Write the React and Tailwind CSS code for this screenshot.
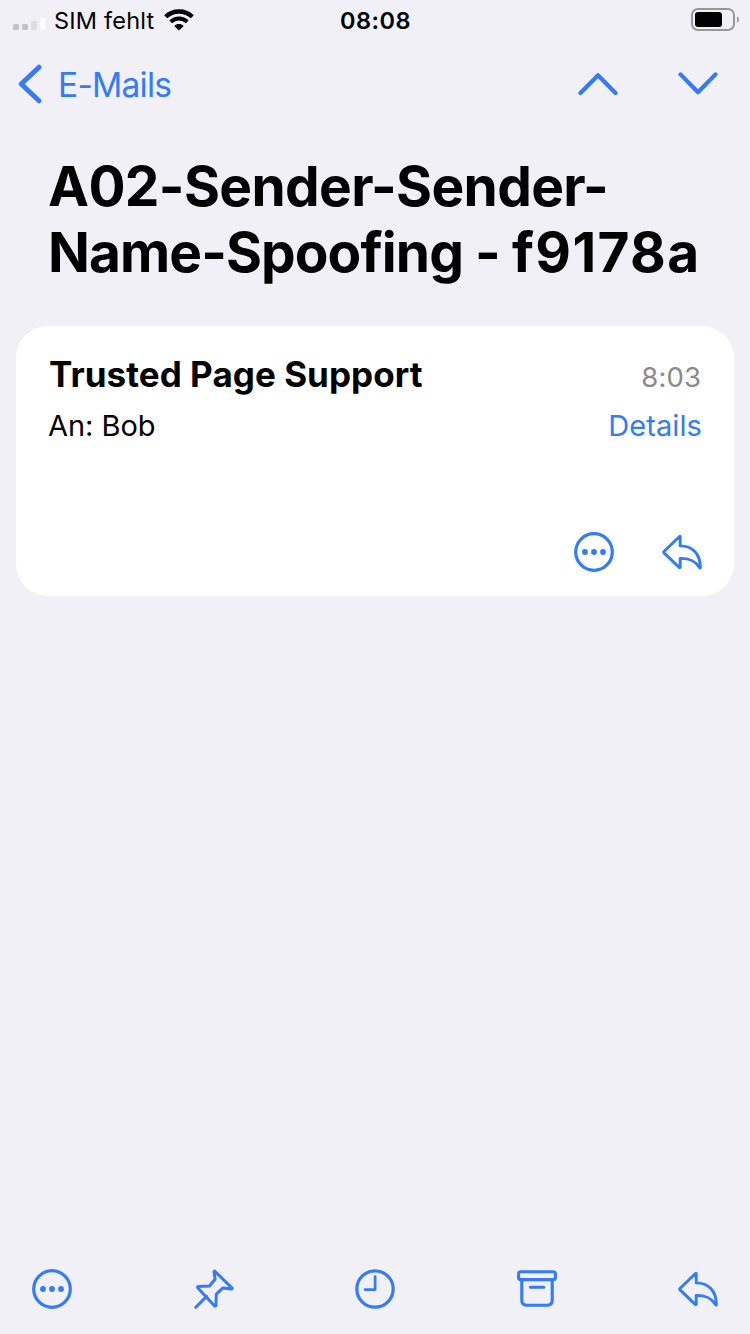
import React from "react";

function MoreIcon() {
  return (
    <svg width="40" height="40" viewBox="0 0 40 40" fill="none" className="shrink-0">
      <circle cx="20" cy="20" r="18.3" stroke="currentColor" strokeWidth="3.2" />
      <circle cx="11" cy="20" r="2.9" fill="currentColor" />
      <circle cx="20" cy="20" r="2.9" fill="currentColor" />
      <circle cx="29" cy="20" r="2.9" fill="currentColor" />
    </svg>
  );
}

function ReplyIcon() {
  return (
    <svg width="40" height="40" viewBox="0 0 40 40" fill="none" className="shrink-0">
      <path
        d="M18.2 4.6V13.9C30.5 13.9 38.2 21.5 38.4 35.6Q38.2 36.6 37.4 35.6C33.6 29.2 28.5 26.3 18.2 26.4V35.2Q17.9 36.1 17.2 35.4L2 20.9Q1.4 20.2 2 19.5L17.2 4.7Q17.9 4 18.2 4.6Z"
        stroke="currentColor"
        strokeWidth="2.9"
        strokeLinejoin="round"
      />
    </svg>
  );
}

function PinIcon() {
  return (
    <svg width="40" height="40" viewBox="0 0 40 40" fill="none" className="shrink-0">
      <path
        d="M20.9 2.2L38.1 19.1Q38.4 19.9 37.4 20L29 18.9L22.3 25.2L21.9 36.4Q21.5 37.5 20.4 36.7L3.7 18.7Q3.2 17.6 4.3 17.4L15.5 17L21.1 10.2L20 2.7Q20.2 1.6 20.9 2.2Z"
        stroke="currentColor"
        strokeWidth="3"
        strokeLinejoin="round"
      />
      <path d="M12.6 27.4L1.8 38.3" stroke="currentColor" strokeWidth="3" strokeLinecap="round" />
    </svg>
  );
}

function ClockIcon() {
  return (
    <svg width="40" height="40" viewBox="0 0 40 40" fill="none" className="shrink-0">
      <circle cx="20" cy="20" r="18.2" stroke="currentColor" strokeWidth="3.2" />
      <path d="M20.1 7.6V20.6H10" stroke="currentColor" strokeWidth="2.7" strokeLinecap="round" strokeLinejoin="round" />
    </svg>
  );
}

function ArchiveIcon() {
  return (
    <svg width="40" height="40" viewBox="0 0 40 40" fill="none" className="shrink-0">
      <rect x="1.6" y="2.7" width="36.8" height="7.9" rx="2.2" stroke="currentColor" strokeWidth="3.1" />
      <path
        d="M4.8 10.6V31.6Q4.8 36.2 9.4 36.2H30.6Q35.2 36.2 35.2 31.6V10.6M13.4 18.3H26.8"
        stroke="currentColor"
        strokeWidth="3.1"
        strokeLinecap="round"
      />
    </svg>
  );
}

function StatusBar() {
  return (
    <header className="grid h-10 grid-cols-[1fr_auto_1fr] items-center pr-[10px] pl-[13px] text-[23.5px] text-black">
      <div className="flex items-center">
        <svg width="33" height="14" viewBox="0 0 33 14" className="mt-[9px] mr-[8px]">
          <rect x="0" y="6" width="6" height="6" rx="1.5" fill="#c3c3c6" />
          <rect x="9" y="6" width="6" height="6" rx="1.5" fill="#c3c3c6" />
          <rect x="18" y="3" width="6" height="9" rx="1.5" fill="#dededf" />
          <rect x="27" y="0" width="6" height="12" rx="1.5" fill="#fafafb" />
        </svg>
        <span className="pt-[2px] tracking-[0.2px]">SIM fehlt</span>
        <svg width="30" height="22" viewBox="0 0 30 22" fill="none" className="ml-[10px]">
          <path d="M1.7 7.8C9 0.7 21 0.7 28.3 7.8" stroke="#000" strokeWidth="4.3" />
          <path d="M6.7 12.8C11.4 8.4 18.6 8.4 23.3 12.8" stroke="#000" strokeWidth="4" />
          <path d="M15 21.5L10.3 16.9C12.9 14.4 17.1 14.4 19.7 16.9Z" fill="#000" />
        </svg>
      </div>
      <span className="-translate-x-px pt-[2px] font-semibold tracking-[0.5px]">08:08</span>
      <svg width="49" height="24" viewBox="0 0 49 24" fill="none" className="justify-self-end">
        <rect x="1" y="1" width="42" height="21" rx="6" stroke="#98989b" strokeWidth="2" />
        <rect x="4" y="4" width="27" height="15" rx="3" fill="#000" />
        <path d="M46 8.5Q48 9.5 48 11.5T46 15Z" fill="#98989b" />
      </svg>
    </header>
  );
}

export default function App() {
  return (
    <div className="flex h-[1334px] w-[750px] flex-col overflow-hidden bg-[#f1f0f6] font-['Inter','Liberation_Sans',sans-serif] text-black">
      <StatusBar />
      <nav className="flex h-[88px] items-center justify-between pr-[32px] pl-[18px] text-[#337bf7]">
        <button className="flex items-center gap-[16px] text-[33.5px] tracking-[-0.75px]">
          <svg width="24" height="40" viewBox="0 0 24 40" fill="none">
            <path d="M21 3.2L3.2 20L21 36.8" stroke="currentColor" strokeWidth="4.9" strokeLinecap="round" strokeLinejoin="round" />
          </svg>
          <span className="pt-[2px]">E-Mails</span>
        </button>
        <div className="flex items-center gap-[60px]">
          <svg width="40" height="24" viewBox="0 0 40 24" fill="none">
            <path d="M2.5 21L20 3.2L37.5 21" stroke="currentColor" strokeWidth="4.2" strokeLinecap="round" strokeLinejoin="round" />
          </svg>
          <svg width="40" height="24" viewBox="0 0 40 24" fill="none">
            <path d="M2.5 2.4L20 20.2L37.5 2.4" stroke="currentColor" strokeWidth="4.2" strokeLinecap="round" strokeLinejoin="round" />
          </svg>
        </div>
      </nav>
      <main className="flex-1">
        <h1 className="px-12 pt-[25px] text-[55px] leading-[66px] font-bold whitespace-nowrap">
          <span className="block tracking-[-0.64px]">A02-Sender-Sender-</span>
          <span className="block tracking-[-0.92px]">
            Name-Spoofing - <span className="tracking-[1.4px]">f9178a</span>
          </span>
        </h1>
        <article className="mx-4 mt-[41px] flex h-[270px] flex-col rounded-[32px] bg-white pt-[23px] pr-8 pl-[33px]">
          <div className="flex h-[50px] items-baseline justify-between leading-[50px]">
            <h2 className="text-[35px] font-bold tracking-[0.05px]">Trusted Page Support</h2>
            <time className="pr-px text-[27.5px] tracking-[0.1px] text-[#8a8a8d]">8:03</time>
          </div>
          <div className="flex h-[54px] items-baseline justify-between text-[29px] leading-[54px]">
            <p className="-ml-px tracking-[-0.05px]">An: Bob</p>
            <button className="tracking-[0.1px] text-[#337bf7]">Details</button>
          </div>
          <div className="mt-auto mb-[24px] flex justify-end gap-12 text-[#337bf7]">
            <button><MoreIcon /></button>
            <button><ReplyIcon /></button>
          </div>
        </article>
      </main>
      <footer className="flex h-[90px] items-center justify-between px-8 text-[#337bf7]">
        <button><MoreIcon /></button>
        <button><PinIcon /></button>
        <button><ClockIcon /></button>
        <button><ArchiveIcon /></button>
        <button><ReplyIcon /></button>
      </footer>
    </div>
  );
}
